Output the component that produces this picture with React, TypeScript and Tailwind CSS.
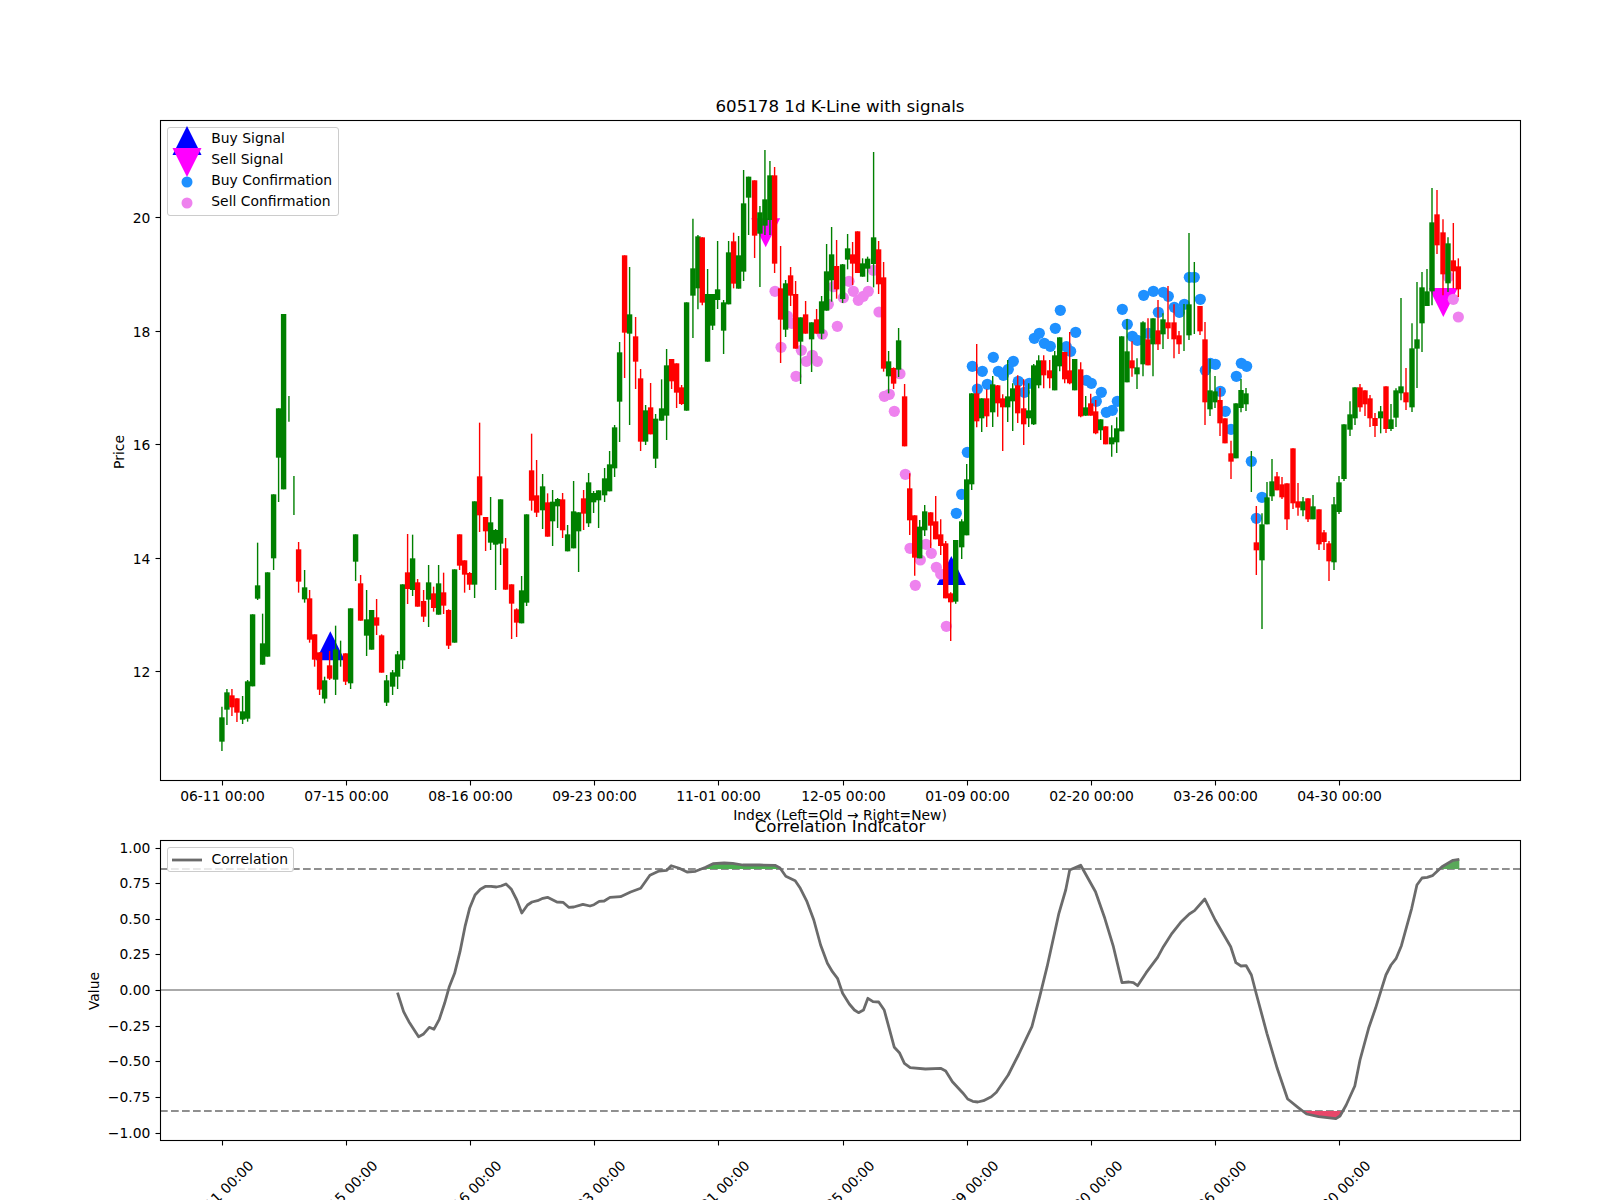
type Candle = [number, number, number, number, number, string]
type Dot = [number, number]

// rows were read off 3x crops of the plot, so every block carries its crop origin
const fromCrop = (ox: number, oy: number, rows: Candle[]): Candle[] =>
  rows.map(([x, hi, top, bot, lo, c]) => [ox + x / 3, oy + hi / 3, oy + top / 3, oy + bot / 3, oy + lo / 3, c])

const dotsFromCrop = (ox: number, oy: number, rows: Dot[]): Dot[] =>
  rows.map(([x, y]) => [ox + x / 3, oy + y / 3])

const candles: Candle[] = [
  ...fromCrop(149.6, 390, [
    [217, 950, 982, 1055, 1083, "g"], [232, 897, 907, 959, 1005, "g"], [247, 897, 916, 952, 978, "r"], [262, 925, 925, 968, 996, "r"],
    [279, 918, 964, 989, 1002, "g"], [294, 870, 874, 986, 995, "g"], [309, 673, 673, 889, 889, "g"], [324, 458, 586, 626, 630, "g"],
    [339, 671, 760, 824, 824, "g"], [354, 547, 547, 800, 800, "g"], [372, 313, 313, 505, 540, "g"], [387, 55, 55, 203, 336, "g"],
    [402, -228, -228, 298, 298, "g"], [418, 18, 0, 0, 95, "g"], [433, 258, 0, 0, 375, "g"], [447, 456, 478, 575, 608, "r"],
    [465, 540, 592, 628, 638, "g"], [480, 600, 625, 749, 758, "r"], [495, 733, 733, 809, 830, "r"], [510, 787, 787, 899, 915, "r"],
    [525, 860, 871, 926, 940, "g"], [540, 783, 826, 866, 870, "r"], [558, 707, 778, 869, 915, "g"], [573, 752, 0, 0, 830, "g"],
    [588, 790, 790, 875, 885, "r"], [603, 655, 655, 880, 897, "g"], [618, 433, 433, 515, 573, "g"], [633, 555, 580, 692, 692, "r"],
    [651, 600, 688, 737, 798, "g"], [666, 660, 660, 779, 779, "g"], [681, 627, 682, 707, 735, "r"], [696, 733, 736, 848, 848, "r"],
    [711, 855, 871, 938, 948, "g"], [729, 840, 847, 890, 915, "g"], [744, 783, 793, 860, 897, "g"], [759, 583, 583, 811, 837, "g"],
    [774, 432, 547, 597, 642, "r"], [789, 434, 505, 600, 618, "g"], [804, 567, 577, 650, 650, "r"], [822, 600, 633, 680, 696, "r"],
    [837, 525, 577, 629, 711, "g"], [852, 590, 610, 654, 665, "r"], [867, 525, 580, 674, 674, "g"], [882, 548, 607, 647, 672, "r"],
    [897, 658, 660, 767, 777, "r"], [915, 538, 538, 758, 758, "g"], [930, 433, 433, 527, 540, "r"], [945, 511, 511, 554, 608, "r"],
    [960, 546, 549, 584, 600, "r"], [975, 334, 334, 584, 624, "g"], [990, 98, 259, 376, 426, "r"], [1008, 381, 381, 424, 483, "r"],
    [1023, 321, 397, 458, 480, "g"], [1038, 417, 420, 464, 600, "g"], [1053, 328, 328, 461, 525, "g"], [1068, 444, 475, 599, 599, "r"],
    [1086, 583, 583, 641, 747, "r"], [1101, 655, 658, 698, 741, "r"], [1116, 558, 601, 700, 700, "g"], [1131, 373, 373, 638, 648, "g"],
    [1146, 131, 241, 332, 362, "r"], [1161, 210, 316, 368, 381, "r"], [1179, 252, 289, 361, 417, "g"], [1194, 310, 337, 440, 440, "r"],
  ]),
  ...fromCrop(499.6, 400, [
    [159, 270, 305, 364, 438, "g"], [174, 294, 297, 319, 384, "g"], [189, 279, 298, 391, 414, "r"], [204, 375, 403, 454, 454, "g"],
    [222, 243, 334, 445, 445, "g"], [237, 337, 337, 394, 516, "g"], [252, 270, 295, 341, 390, "r"], [267, 219, 247, 370, 381, "g"],
    [282, 273, 279, 307, 339, "g"], [297, 271, 271, 301, 384, "g"], [315, 204, 235, 286, 306, "g"], [330, 153, 193, 274, 274, "g"],
    [345, 75, 82, 205, 231, "g"],
  ]),
  ...fromCrop(549.6, 130, [
    [210, 636, 667, 815, 936, "g"], [225, 376, 376, 608, 744, "r"], [240, 411, 553, 611, 885, "g"], [258, 561, 619, 695, 777, "r"],
    [273, 717, 745, 935, 963, "r"], [288, 825, 841, 935, 945, "g"], [303, 759, 832, 913, 913, "r"], [318, 852, 866, 986, 1014, "g"],
    [336, 748, 835, 872, 872, "g"], [351, 657, 706, 857, 930, "g"], [366, 687, 687, 754, 777, "r"], [381, 700, 700, 788, 834, "r"],
    [396, 765, 772, 822, 825, "r"], [411, 517, 517, 842, 842, "g"], [430, 266, 415, 497, 624, "g"], [445, 315, 319, 475, 538, "g"],
    [458, 322, 322, 518, 526, "r"], [474, 417, 492, 695, 695, "g"], [489, 492, 492, 587, 600, "g"], [504, 333, 478, 510, 537, "g"],
    [522, 510, 517, 602, 672, "g"], [537, 333, 367, 523, 523, "g"], [552, 308, 334, 461, 475, "r"], [567, 318, 376, 476, 476, "g"],
    [582, 120, 220, 425, 453, "g"], [597, 140, 140, 203, 315, "g"], [615, 151, 151, 317, 384, "r"], [631, 228, 247, 311, 471, "g"],
    [646, 60, 208, 287, 315, "g"], [661, 93, 136, 270, 315, "g"], [675, 111, 136, 401, 429, "r"], [693, 348, 475, 569, 699, "r"],
    [708, 450, 460, 599, 621, "g"], [723, 411, 436, 497, 528, "r"], [738, 453, 492, 656, 656, "r"], [753, 562, 562, 635, 762, "g"],
    [768, 513, 553, 611, 611, "r"], [786, 577, 577, 628, 726, "g"], [801, 537, 568, 611, 611, "r"], [816, 498, 514, 611, 627, "g"],
    [831, 342, 424, 542, 542, "g"], [846, 291, 373, 451, 515, "g"], [861, 330, 408, 478, 506, "r"], [879, 402, 403, 507, 519, "g"],
    [894, 312, 355, 389, 418, "g"], [909, 336, 373, 401, 465, "r"], [924, 304, 304, 429, 429, "r"], [939, 385, 400, 440, 440, "g"],
    [954, 380, 386, 416, 456, "g"], [972, 66, 322, 402, 472, "g"], [987, 333, 358, 463, 492, "r"], [1002, 396, 442, 716, 725, "r"],
    [1017, 663, 694, 739, 790, "g"], [1032, 712, 714, 761, 777, "r"], [1047, 594, 631, 719, 741, "g"], [1065, 762, 799, 949, 949, "r"],
  ]),
  ...fromCrop(849.7, 300, [
    [180, 520, 565, 661, 705, "r"], [195, 646, 646, 773, 827, "r"], [210, 660, 680, 775, 775, "g"], [225, 615, 634, 691, 708, "g"],
    [243, 637, 637, 677, 744, "r"], [258, 588, 664, 718, 718, "r"], [273, 658, 703, 738, 765, "r"], [288, 723, 730, 895, 895, "r"],
    [303, 877, 880, 907, 1023, "r"], [318, 720, 720, 905, 911, "g"], [336, 658, 664, 742, 777, "g"], [351, 492, 538, 706, 706, "g"],
    [366, 280, 280, 553, 570, "g"], [381, 132, 280, 364, 382, "r"], [396, 295, 295, 355, 396, "g"], [411, 268, 295, 349, 381, "r"],
    [429, 228, 253, 337, 381, "g"], [444, 255, 256, 310, 350, "r"], [459, 283, 295, 322, 453, "r"], [474, 180, 289, 322, 366, "g"],
    [489, 250, 265, 304, 393, "g"], [504, 226, 256, 340, 369, "r"], [522, 238, 325, 373, 435, "r"], [537, 250, 331, 355, 381, "g"],
    [552, 192, 196, 373, 375, "g"], [567, 166, 181, 256, 265, "g"], [582, 166, 181, 226, 265, "r"], [600, 180, 211, 235, 265, "r"],
    [615, 153, 166, 271, 271, "g"], [630, 112, 112, 199, 214, "g"], [645, 156, 156, 238, 250, "r"], [660, 96, 211, 250, 253, "r"],
    [675, 177, 177, 271, 271, "g"], [693, 187, 208, 349, 352, "r"], [708, 288, 322, 347, 347, "g"], [723, 281, 310, 347, 347, "r"],
    [738, 300, 334, 400, 403, "r"], [753, 358, 358, 391, 420, "g"], [768, 379, 379, 433, 433, "r"], [786, 376, 412, 433, 470, "g"],
    [801, 352, 385, 427, 459, "g"], [816, 109, 109, 394, 394, "g"],
  ]),
  ...fromCrop(1000, 220, [
    [381, 297, 394, 487, 487, "g"], [396, 364, 421, 445, 470, "r"], [411, 415, 442, 463, 507, "g"], [429, 304, 307, 433, 469, "g"],
    [444, 295, 358, 436, 436, "r"], [459, 295, 295, 373, 469, "g"], [474, 240, 331, 373, 390, "r"], [489, 280, 298, 343, 387, "g"],
    [504, 198, 307, 325, 357, "r"], [522, 253, 307, 358, 415, "r"], [537, 333, 346, 373, 402, "r"], [552, 252, 0, 0, 393, "g"],
    [567, 39, 253, 346, 360, "g"], [583, 126, 0, 0, 342, "g"], [600, 258, 258, 334, 345, "r"],
  ]),
  ...fromCrop(1200, 170, [
    [15, 456, 508, 697, 765, "r"], [30, 567, 661, 718, 738, "g"], [45, 618, 664, 697, 714, "g"], [60, 654, 690, 760, 798, "r"],
    [75, 745, 745, 820, 820, "r"], [93, 812, 850, 875, 927, "r"], [108, 700, 700, 865, 865, "g"], [123, 627, 660, 714, 727, "g"],
    [138, 654, 670, 703, 723, "g"], [154, 843, 0, 0, 966, "g"], [169, 1008, 1117, 1141, 1215, "r"], [186, 1030, 1063, 1171, 1377, "g"],
    [201, 936, 982, 1063, 1063, "g"], [216, 867, 934, 979, 993, "g"], [231, 906, 919, 961, 961, "r"], [246, 921, 943, 982, 987, "r"],
    [261, 940, 940, 1048, 1080, "r"], [279, 835, 835, 1000, 1017, "r"], [294, 939, 994, 1013, 1037, "r"], [309, 981, 994, 1021, 1039, "g"],
    [324, 985, 985, 1048, 1056, "r"], [339, 975, 1009, 1048, 1048, "g"], [357, 1018, 1018, 1123, 1140, "r"], [372, 1080, 1087, 1116, 1140, "r"],
    [387, 1113, 1120, 1174, 1233, "r"], [402, 981, 1003, 1177, 1200, "g"], [417, 918, 937, 1026, 1032, "g"], [432, 763, 763, 927, 933, "g"],
    [450, 694, 733, 779, 798, "g"], [465, 652, 652, 745, 765, "g"], [480, 642, 652, 712, 725, "r"], [495, 661, 661, 703, 738, "r"],
    [510, 675, 685, 745, 771, "r"], [525, 729, 744, 768, 801, "r"], [542, 708, 724, 745, 790, "g"], [558, 649, 649, 777, 789, "r"],
    [573, 702, 748, 777, 783, "g"], [588, 655, 661, 743, 771, "g"], [603, 384, 649, 670, 691, "g"], [618, 594, 667, 697, 720, "r"],
    [636, 460, 535, 712, 726, "g"], [651, 336, 508, 536, 654, "g"], [666, 306, 352, 460, 546, "g"], [681, 297, 364, 408, 408, "g"],
    [696, 54, 157, 364, 406, "g"], [711, 60, 133, 226, 252, "r"], [729, 148, 187, 313, 376, "r"], [744, 202, 220, 340, 366, "g"],
    [760, 159, 271, 304, 355, "r"], [775, 265, 289, 358, 381, "r"],
  ]),
]

const buyDots: Dot[] = [
  ...dotsFromCrop(850, 300, [[319, 640], [335, 583], [352, 457], [367, 199], [382, 267], [397, 214], [412, 253], [430, 172], [445, 214]]),
  ...dotsFromCrop(1000, 220, [
    [10, 466], [25, 448], [40, 424], [55, 484], [73, 517], [88, 490], [103, 355], [118, 340], [133, 370], [151, 379], [166, 325], [181, 271],
    [199, 380], [212, 394], [227, 337], [259, 481], [274, 490], [289, 544], [304, 517], [319, 577], [337, 571], [352, 544], [367, 268],
    [382, 313], [397, 349], [412, 361], [431, 226], [445, 340], [460, 214], [475, 277], [490, 217], [505, 229], [523, 262], [538, 277],
    [553, 253], [568, 172], [583, 172], [601, 238], [616, 451], [631, 430], [646, 433], [661, 514], [676, 574], [709, 469], [724, 430],
  ]),
  ...dotsFromCrop(1200, 170, [[93, 778], [140, 589], [154, 874], [169, 1045], [186, 982]]),
]

const sellDots: Dot[] = [
  ...dotsFromCrop(550, 130, [
    [675, 484], [693, 652], [712, 558], [725, 580], [738, 739], [754, 661], [769, 694], [787, 676], [802, 694], [817, 613], [835, 523],
    [850, 470], [862, 589], [880, 503], [897, 454], [910, 484], [925, 511], [940, 499], [955, 484], [970, 421], [987, 546], [1003, 799],
    [1018, 793], [1033, 844], [1050, 731], [1066, 1033],
  ]),
  ...dotsFromCrop(850, 300, [[180, 745], [196, 856], [211, 780], [228, 733], [244, 760], [259, 802], [272, 822], [289, 979]]),
  ...dotsFromCrop(1200, 170, [[745, 320], [760, 388], [775, 441]]),
]

const corr: Dot[] = [
  [397.5, 992.7], [403.6, 1011.7], [408.9, 1021.7], [418.6, 1036.7], [423.2, 1034.3], [429.3, 1027.3], [433.9, 1029.3], [439.3, 1019.3],
  [444.6, 1003.3], [449.3, 986.7], [454.6, 973.3], [460, 951.7], [465, 926.7], [469.6, 908.3], [475, 895], [480.4, 889.3], [485.7, 886.3],
  [491, 886.3], [496.4, 887], [501, 886], [506, 884], [511.4, 889.3], [516.8, 900], [521.8, 913], [527.5, 905], [532, 902], [537.5, 900.7],
  [542.9, 898.3], [547.5, 897.3], [556.9, 902], [563, 902.3], [568.7, 907.3], [573.8, 907], [582.9, 904.3], [590, 906], [594, 904.7],
  [599.2, 901.3], [604.2, 901], [610, 897.3], [620.5, 896.7], [630.6, 892], [640.7, 888.3], [649.9, 875.3], [659, 871], [666.8, 870.3],
  [671.2, 865.7], [679.3, 868.3], [687, 872], [695.5, 871.3], [705.7, 867.3], [713, 863.7], [724.2, 863], [732.7, 863.3], [742.8, 865],
  [759.7, 865], [775, 865.3], [780, 868], [785.8, 876.3], [795.2, 880.7], [800.3, 888.3], [807, 901.7], [813.8, 920], [820.6, 945],
  [827.4, 963.3], [832.4, 971.7], [837.5, 978.3], [842.6, 993.3], [849.3, 1004], [854.4, 1010], [858.5, 1012.7], [863.5, 1010], [867.9, 998.3],
  [873, 1001.7], [878.7, 1002], [884.2, 1010], [889.2, 1028.3], [894.3, 1047.3], [899.4, 1052.7], [904.4, 1063.3], [910.2, 1067.7],
  [925.4, 1069], [940.6, 1068.3], [945.7, 1071], [952.4, 1081.7], [962.6, 1092.7], [967.7, 1099], [972.7, 1101.3], [977.8, 1102],
  [983.5, 1100.7], [991.3, 1096.7], [996.4, 1092.3], [1008.2, 1075], [1018.4, 1055], [1031.9, 1026.7], [1039.7, 996.7], [1047.1, 966.7],
  [1058.9, 913.3], [1065.7, 890], [1069.7, 870], [1080.7, 865.3], [1095.5, 891.7], [1104.8, 918.3], [1113.4, 946.7], [1122, 982.7],
  [1129, 982], [1133.4, 982.7], [1137.6, 985.7], [1146.2, 972.7], [1157.6, 957.3], [1163.4, 946.7], [1172, 933.3], [1180.7, 922.3],
  [1189.3, 914], [1194.5, 910.7], [1204.8, 899], [1215.2, 920], [1230.7, 946.7], [1235.9, 962.7], [1241, 966], [1246.2, 965.7], [1251.4, 975],
  [1256.6, 995], [1266.9, 1033.3], [1277.2, 1068.3], [1287.6, 1099], [1297.9, 1107.3], [1306.6, 1114], [1318.6, 1116.7], [1335.9, 1118.7],
  [1340, 1116], [1346.2, 1105], [1354.8, 1086], [1360, 1060], [1368.6, 1028.3], [1375.5, 1008.3], [1380.7, 991.7], [1385.9, 975], [1391, 965],
  [1396.2, 958.3], [1401.4, 945.7], [1411.7, 908.3], [1416.9, 885], [1422, 878], [1427.2, 877.3], [1432.4, 875.7], [1442, 866.7], [1453, 860.3],
  [1459.3, 859.3],
]

const dates = ["06-11 00:00", "07-15 00:00", "08-16 00:00", "09-23 00:00", "11-01 00:00", "12-05 00:00", "01-09 00:00", "02-20 00:00", "03-26 00:00", "04-30 00:00"]
const tickX = [222.5, 346.5, 470.5, 594.5, 718.5, 843.5, 967.5, 1091.5, 1215.5, 1339.5]
const priceTicks: [string, number][] = [["20", 217.5], ["18", 331.5], ["16", 444.5], ["14", 558.5], ["12", 671.5]]
const corrTicks = ["1.00", "0.75", "0.50", "0.25", "0.00", "−0.25", "−0.50", "−0.75", "−1.00"]

const toPath = (pts: Dot[]) => pts.map(([x, y], i) => `${i ? "L" : "M"}${x} ${y}`).join(" ")

const fillAbove = (from: number, to: number, level: number) => {
  const pts = corr.filter(([x]) => x >= from && x <= to)
  return `M${from} ${level} ` + toPath(pts).replace("M", "L") + ` L${to} ${level} Z`
}

const up = (x: number, y: number) => `${x - 14.5},${y} ${x + 14.5},${y} ${x},${y - 29}`
const down = (x: number, y: number) => `${x - 14.5},${y} ${x + 14.5},${y} ${x},${y + 29}`

const Candles = () => (
  <g>
    {candles.map(([x, hi, top, bot, lo, c], i) => {
      const color = c === "r" ? "#ff0000" : "#008000"
      return (
        <g key={i}>
          <line x1={x} x2={x} y1={hi} y2={lo} stroke={color} strokeWidth={1.4} />
          {top !== bot && <rect x={x - 2.7} y={top} width={5.4} height={bot - top} fill={color} />}
        </g>
      )
    })}
  </g>
)

const PriceChart = () => (
  <svg viewBox="0 0 1600 830" className="block w-[1600px] h-[830px] overflow-visible">
    <text x={840} y={112} textAnchor="middle" fontSize={16.67}>605178 1d K-Line with signals</text>
    <polygon points={up(330.3, 660.3)} fill="#0000ff" />
    <polygon points={up(951.3, 585)} fill="#0000ff" />
    <polygon points={down(765.7, 218.3)} fill="#ff00ff" />
    <polygon points={down(1443.3, 288)} fill="#ff00ff" />
    {buyDots.map(([x, y], i) => <circle key={i} cx={x} cy={y} r={5.6} fill="#1e90ff" />)}
    {sellDots.map(([x, y], i) => <circle key={i} cx={x} cy={y} r={5.6} fill="#ee82ee" />)}
    <Candles />
    <rect x={160.5} y={120.5} width={1360} height={660} fill="none" stroke="#000" strokeWidth={1.1} />
    {priceTicks.map(([label, y]) => (
      <g key={label}>
        <line x1={155.5} x2={160} y1={y} y2={y} stroke="#000" strokeWidth={1.1} />
        <text x={150.3} y={y + 5} textAnchor="end" fontSize={13.89}>{label}</text>
      </g>
    ))}
    {tickX.map((x, i) => (
      <g key={x}>
        <line x1={x} x2={x} y1={780.5} y2={785.5} stroke="#000" strokeWidth={1.1} />
        <text x={x} y={801} textAnchor="middle" fontSize={13.89}>{dates[i]}</text>
      </g>
    ))}
    <text x={840} y={820} textAnchor="middle" fontSize={13.89}>Index (Left=Old → Right=New)</text>
    <text transform="translate(124 452) rotate(-90)" textAnchor="middle" fontSize={13.89}>Price</text>
  </svg>
)

const CorrelationChart = () => (
  <svg viewBox="0 830 1600 370" className="block w-[1600px] h-[370px] overflow-visible">
    <text x={840} y={831.7} textAnchor="middle" fontSize={16.67}>Correlation Indicator</text>
    <line x1={160} x2={1520} y1={990} y2={990} stroke="#aaaaaa" strokeWidth={2} />
    <line x1={160} x2={1520} y1={869} y2={869} stroke="#8f8f8f" strokeWidth={2.08} strokeDasharray="7.7 3.3" />
    <line x1={160} x2={1520} y1={1111} y2={1111} stroke="#8f8f8f" strokeWidth={2.08} strokeDasharray="7.7 3.3" />
    <path d={fillAbove(705, 780, 869)} fill="#4caf50" />
    <path d={fillAbove(1440, 1459.3, 869)} fill="#5aa85a" />
    <path d={fillAbove(1304, 1342, 1111)} fill="#e8476a" />
    <path d={toPath(corr)} fill="none" stroke="#6b6b6b" strokeWidth={2.78} strokeLinejoin="round" />
    <rect x={160.5} y={840.5} width={1360} height={300} fill="none" stroke="#000" strokeWidth={1.1} />
    {corrTicks.map((label, i) => {
      const y = Math.round(847.5 + i * 35.65) + 0.5
      return (
        <g key={label}>
          <line x1={155.5} x2={160} y1={y} y2={y} stroke="#000" strokeWidth={1.1} />
          <text x={150.3} y={y + 4} textAnchor="end" fontSize={13.89}>{label}</text>
        </g>
      )
    })}
    {tickX.map((x, i) => (
      <g key={x}>
        <line x1={x} x2={x} y1={1140.5} y2={1145.5} stroke="#000" strokeWidth={1.1} />
        <text transform={`translate(${x - 1.5} 1193) rotate(-45)`} y={5} textAnchor="middle" fontSize={13.89}>{dates[i]}</text>
      </g>
    ))}
    <text transform="translate(99 991) rotate(-90)" textAnchor="middle" fontSize={13.89}>Value</text>
  </svg>
)

const LegendRow = ({ label, children }: { label: string; children: React.ReactNode }) => (
  <div className="flex items-center h-[21px]">
    <svg viewBox="0 0 30 21" className="w-[30px] h-[21px] overflow-visible shrink-0">{children}</svg>
    <span className="ml-[9.8px] whitespace-nowrap">{label}</span>
  </div>
)

export default function App() {
  return (
    <div className="w-[1600px] h-[1200px] overflow-hidden flex flex-col bg-white text-black text-[13.89px] leading-none font-['DejaVu_Sans',sans-serif]">
      <div className="relative h-[830px]">
        <PriceChart />
        <div className="absolute left-[167px] top-[127px] w-[172px] h-[89px] pl-[3.5px] rounded-[3px] border border-[#cccccc] bg-white/80 flex flex-col">
          <LegendRow label="Buy Signal">
            <polygon points="0.5,27 29.5,27 15,-2" fill="#0000ff" />
          </LegendRow>
          <LegendRow label="Sell Signal">
            <polygon points="0.5,-1 29.5,-1 15,28" fill="#ff00ff" />
          </LegendRow>
          <LegendRow label="Buy Confirmation">
            <circle cx={15} cy={12} r={5.5} fill="#1e90ff" />
          </LegendRow>
          <LegendRow label="Sell Confirmation">
            <circle cx={15} cy={12} r={5.5} fill="#ee82ee" />
          </LegendRow>
        </div>
      </div>
      <div className="relative h-[370px]">
        <CorrelationChart />
        <div className="absolute left-[167px] top-[17px] w-[127px] h-[25px] pl-[4px] rounded-[3px] border border-[#cccccc] bg-white/80 flex items-center">
          <svg viewBox="0 0 30 10" className="w-[30px] h-[10px] shrink-0">
            <line x1={0} x2={30} y1={5} y2={5} stroke="#6b6b6b" strokeWidth={2.78} />
          </svg>
          <span className="ml-[9.5px] whitespace-nowrap">Correlation</span>
        </div>
      </div>
    </div>
  )
}
